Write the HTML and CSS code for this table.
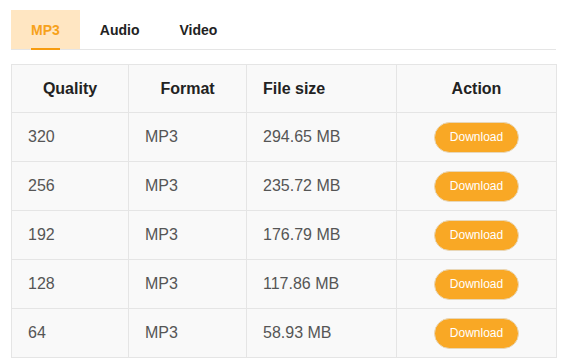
FILE: index.html
```html
<!DOCTYPE html>
<html lang="en">
<head>
    <meta charset="UTF-8">
    <meta name="viewport" content="width=device-width, initial-scale=1.0">
    <title>Download</title>
    <link rel="stylesheet" href="styles.css">
</head>
<body>

    <div class="wrapper">
        <div class="tabs">
            <span class="tab active">MP3</span>
            <span class="tab">Audio</span>
            <span class="tab">Video</span>
        </div>

        <table class="files">
            <thead>
                <tr>
                    <th class="col-quality">Quality</th>
                    <th class="col-format">Format</th>
                    <th class="col-size left">File size</th>
                    <th class="col-action">Action</th>
                </tr>
            </thead>
            <tbody>
                <tr>
                    <td>320</td>
                    <td>MP3</td>
                    <td>294.65 MB</td>
                    <td class="action"><button class="btn">Download</button></td>
                </tr>
                <tr>
                    <td>256</td>
                    <td>MP3</td>
                    <td>235.72 MB</td>
                    <td class="action"><button class="btn">Download</button></td>
                </tr>
                <tr>
                    <td>192</td>
                    <td>MP3</td>
                    <td>176.79 MB</td>
                    <td class="action"><button class="btn">Download</button></td>
                </tr>
                <tr>
                    <td>128</td>
                    <td>MP3</td>
                    <td>117.86 MB</td>
                    <td class="action"><button class="btn">Download</button></td>
                </tr>
                <tr>
                    <td>64</td>
                    <td>MP3</td>
                    <td>58.93 MB</td>
                    <td class="action"><button class="btn">Download</button></td>
                </tr>
            </tbody>
        </table>
    </div>

</body>
</html>
```

FILE: styles.css
```css
body {
    margin: 0;
    font-family: "Liberation Sans", Arial, sans-serif;
    background-color: #fff;
}
.wrapper {
    width: 545px;
    padding: 10px 0 0 11px;
}
.tabs {
    display: flex;
    border-bottom: 1px solid #e5e5e5;
}
.tab {
    position: relative;
    height: 39px;
    line-height: 41px;
    padding: 0 20px;
    font-size: 14px;
    font-weight: bold;
    color: #222;
}
.tab.active {
    background-color: #ffe6c2;
    color: #f7a21b;
}
.tab.active::after {
    content: "";
    position: absolute;
    left: 20px;
    right: 20px;
    bottom: -1px;
    height: 2px;
    background-color: #f79c0e;
}
.files {
    margin-top: 14px;
    width: 545px;
    border-collapse: collapse;
    background-color: #f9f9f9;
    table-layout: fixed;
}
.files th,
.files td {
    border: 1px solid #e5e5e5;
    height: 49px;
    padding: 0 0 0 16px;
    font-size: 16px;
    box-sizing: border-box;
}
.files th {
    height: 48px;
    color: #222;
    font-weight: bold;
    text-align: center;
    padding: 0;
}
.files th.left {
    text-align: left;
    padding-left: 16px;
}
.files td {
    color: #555;
    text-align: left;
}
.col-quality { width: 117px; }
.col-format { width: 118px; }
.col-size { width: 150px; }
.col-action { width: 160px; }

.files td.action {
    text-align: center;
    padding: 0;
}
.btn {
    font-family: "Liberation Sans", Arial, sans-serif;
    font-size: 12px;
    color: #fff;
    background-color: #f9a825;
    border: 1px solid #e8d7b8;
    border-radius: 16px;
    height: 31px;
    padding: 0 15px;
    cursor: pointer;
}
```
